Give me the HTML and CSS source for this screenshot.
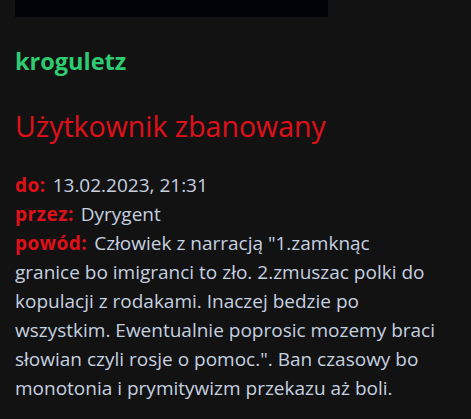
FILE: index.html
```html
<!DOCTYPE html>
<html lang="pl">
<head>
    <meta charset="UTF-8">
    <meta name="viewport" content="width=device-width, initial-scale=1.0">
    <title>kroguletz</title>
    <link rel="stylesheet" href="styles.css">
</head>
<body>
    <div class="profile">
        <div class="avatar"></div>
        <h3 class="username">kroguletz</h3>
        <h2 class="ban-title">Użytkownik zbanowany</h2>
        <div class="ban-info">
            <span class="label">do:</span> 13.02.2023, 21:31<br>
            <span class="label">przez:</span> Dyrygent<br>
            <span class="label">powód:</span> Człowiek z narracją "1.zamknąc granice bo imigranci to zło. 2.zmuszac polki do kopulacji z rodakami. Inaczej bedzie po wszystkim. Ewentualnie poprosic mozemy braci słowian czyli rosje o pomoc.". Ban czasowy bo monotonia i prymitywizm przekazu aż boli.
        </div>
    </div>
</body>
</html>
```

FILE: styles.css
```css
body {
    background-color: #121212;
    color: #c6d1e0;
    font-family: 'Open Sans', 'Noto Sans', sans-serif;
    margin: 0;
    padding: 0 15px;
}
.profile {
    max-width: 420px;
}
.avatar {
    width: 313px;
    height: 17px;
    background-color: #020308;
}
.username {
    color: #2ecc71;
    font-size: 23.5px;
    font-weight: bold;
    margin: 29px 0 0;
    line-height: 30px;
}
.ban-title {
    color: #e0101a;
    font-size: 28.5px;
    font-weight: normal;
    margin: 30px 0 0;
    line-height: 40px;
}
.ban-info {
    margin-top: 25px;
    font-size: 19px;
    line-height: 29px;
}
.label {
    color: #e0101a;
    font-weight: bold;
    letter-spacing: 0.5px;
    padding-right: 2px;
}
```
